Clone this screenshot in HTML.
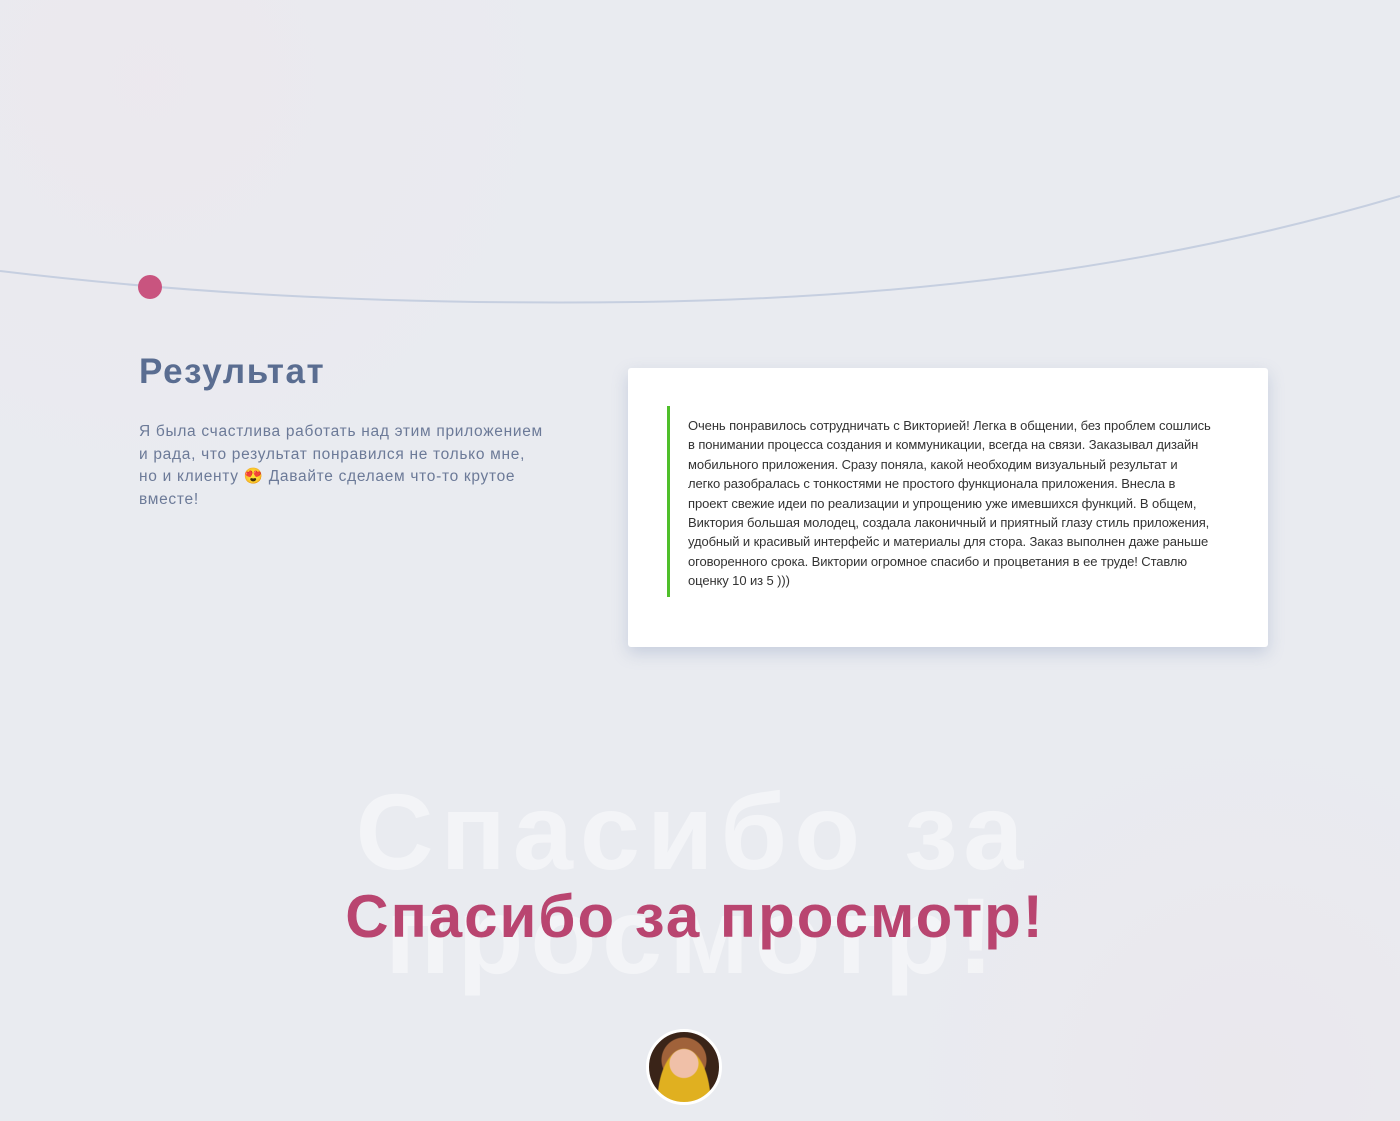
<!DOCTYPE html>
<html><head><meta charset="utf-8"><style>
html,body{margin:0;padding:0}
body{width:1400px;height:1121px;position:relative;overflow:hidden;background:#e9ebf0;font-family:"Liberation Sans",sans-serif}
.bg{position:absolute;inset:0;background:radial-gradient(circle at 150px 80px,rgba(238,230,236,.5),rgba(238,230,236,0) 420px),radial-gradient(circle at 1250px 1080px,rgba(236,228,234,.5),rgba(236,228,234,0) 350px)}
h2{position:absolute;left:139px;top:352px;margin:0;font-size:35px;font-weight:bold;color:#5a6d91;letter-spacing:1.6px}
.lead{position:absolute;left:139px;top:421px;width:460px;font-size:15.5px;line-height:22.5px;color:#6c7a98;letter-spacing:.7px;white-space:nowrap}
.card{position:absolute;left:628px;top:368px;width:640px;height:279px;background:#fff;border-radius:3px;box-shadow:0 6px 16px rgba(120,140,180,.3)}
.bar{position:absolute;left:39px;top:38px;width:3px;height:191px;background:#4fbf2a}
.q{position:absolute;left:60px;top:48px;width:560px;font-size:13px;line-height:19.4px;color:#333;white-space:nowrap;letter-spacing:-.1px}
.ghost{position:absolute;left:0;width:1386px;text-align:center;top:780px;font-size:108px;line-height:104px;font-weight:bold;color:rgba(255,255,255,.45);letter-spacing:7px}
.thanks{position:absolute;left:0;width:1390px;text-align:center;top:882px;font-size:60px;font-weight:bold;color:#b94570;letter-spacing:2px}
.ava{position:absolute;left:646px;top:1029px;width:70px;height:70px;border-radius:50%;border:3px solid #fff;background:radial-gradient(circle at 50% 45%,#f0c0a8 0 14px,transparent 15px),radial-gradient(ellipse at 50% 100%,#e0b020 0 26px,transparent 27px),radial-gradient(circle at 50% 40%,#a0623a 0 22px,#3a2418 23px)}
</style></head><body>
<div class="bg"></div>
<svg width="1400" height="1121" style="position:absolute;left:0;top:0">
<path d="M0 271 C200 295 400 305 640 302 C900 298 1150 270 1400 196" fill="none" stroke="#c6cfe0" stroke-width="2"/>
<circle cx="150" cy="287" r="12" fill="#c9547f"/>
</svg>
<h2>Результат</h2>
<div class="lead">Я была счастлива работать над этим приложением<br>и рада, что результат понравился не только мне,<br>но и клиенту 😍 Давайте сделаем что-то крутое<br>вместе!</div>
<div class="card"><div class="bar"></div><div class="q">Очень понравилось сотрудничать с Викторией! Легка в общении, без проблем сошлись<br>в понимании процесса создания и коммуникации, всегда на связи. Заказывал дизайн<br>мобильного приложения. Сразу поняла, какой необходим визуальный результат и<br>легко разобралась с тонкостями не простого функционала приложения. Внесла в<br>проект свежие идеи по реализации и упрощению уже имевшихся функций. В общем,<br>Виктория большая молодец, создала лаконичный и приятный глазу стиль приложения,<br>удобный и красивый интерфейс и материалы для стора. Заказ выполнен даже раньше<br>оговоренного срока. Виктории огромное спасибо и процветания в ее труде! Ставлю<br>оценку 10 из 5 )))</div></div>
<div class="ghost">Спасибо за<br>просмотр!</div>
<div class="thanks">Спасибо за просмотр!</div>
<div class="ava"></div>
</body></html>
